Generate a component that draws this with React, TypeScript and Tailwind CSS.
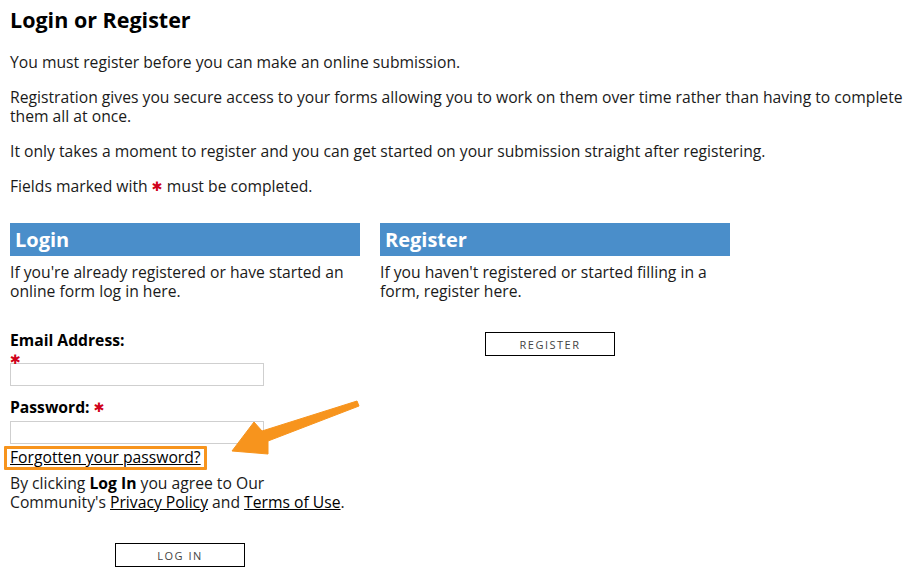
import React from "react";

const Req = () => (
  <span className="text-[#d0021b] text-[13px] leading-none align-[1px] font-['DejaVu_Sans',sans-serif]">✱</span>
);

const OutlineButton: React.FC<{ label: string }> = ({ label }) => (
  <button className="w-[130px] h-[24px] border border-black bg-white text-[11px] tracking-[1.5px] text-[#444] font-['Open_Sans',sans-serif] uppercase">
    {label}
  </button>
);

export default function App() {
  return (
    <div className="relative w-[924px] h-[578px] bg-white text-[#1a1a1a] font-['Open_Sans',sans-serif] text-[15.7px] leading-[19px] px-[10px] pt-[7px] overflow-hidden">
      <h1 className="text-[21.5px] leading-[26px] font-bold text-black">Login or Register</h1>

      <p className="mt-[20px]">You must register before you can make an online submission.</p>
      <p className="mt-[16px]">
        Registration gives you secure access to your forms allowing you to work on them over time rather than having to complete them all at once.
      </p>
      <p className="mt-[16px]">It only takes a moment to register and you can get started on your submission straight after registering.</p>
      <p className="mt-[16px]">
        Fields marked with <Req /> must be completed.
      </p>

      <div className="flex gap-[20px] mt-[27px]">
        {/* Login column */}
        <div className="w-[350px]">
          <h2 className="h-[33px] bg-[#4a8eca] text-white text-[20px] font-bold leading-[33px] pl-[5px]">Login</h2>
          <p className="mt-[7px]">If you're already registered or have started an online form log in here.</p>

          <form className="mt-[30px]">
            <label className="block font-bold text-black">
              Email Address:
              <br />
              <Req />
            </label>
            <input className="block w-[254px] h-[23px] border border-[#cfcfcf] mt-[-6px]" />

            <label className="block font-bold text-black mt-[12px]">
              Password: <Req />
            </label>
            <input type="password" className="block w-[254px] h-[23px] border border-[#cfcfcf] mt-[4px]" />

            <div className="relative inline-block mt-[4px]">
              <a href="#" className="underline text-black">Forgotten your password?</a>
              <span className="absolute left-[-6px] right-[-6px] top-[-2px] bottom-[-3px] border-[3px] border-[#f7941d] rounded-[1px]" />
            </div>

            <p className="mt-[7px]">
              By clicking <b className="text-black">Log In</b> you agree to Our Community's{" "}
              <a href="#" className="underline text-black">Privacy Policy</a> and{" "}
              <a href="#" className="underline text-black">Terms of Use</a>.
            </p>

            <div className="ml-[105px] mt-[31px]">
              <OutlineButton label="Log In" />
            </div>
          </form>
        </div>

        {/* Register column */}
        <div className="w-[350px]">
          <h2 className="h-[33px] bg-[#4a8eca] text-white text-[20px] font-bold leading-[33px] pl-[5px]">Register</h2>
          <p className="mt-[7px]">If you haven't registered or started filling in a form, register here.</p>
          <div className="ml-[105px] mt-[31px]">
            <OutlineButton label="Register" />
          </div>
        </div>
      </div>

      {/* annotation arrow */}
      <svg className="absolute left-0 top-0 pointer-events-none" width="924" height="578">
        <polygon
          points="232,451 254,422 262,431 357,401 359,406 268,441 268,454"
          fill="#f7941d"
          stroke="#f7941d"
          strokeWidth="1"
          strokeLinejoin="round"
        />
      </svg>
    </div>
  );
}
